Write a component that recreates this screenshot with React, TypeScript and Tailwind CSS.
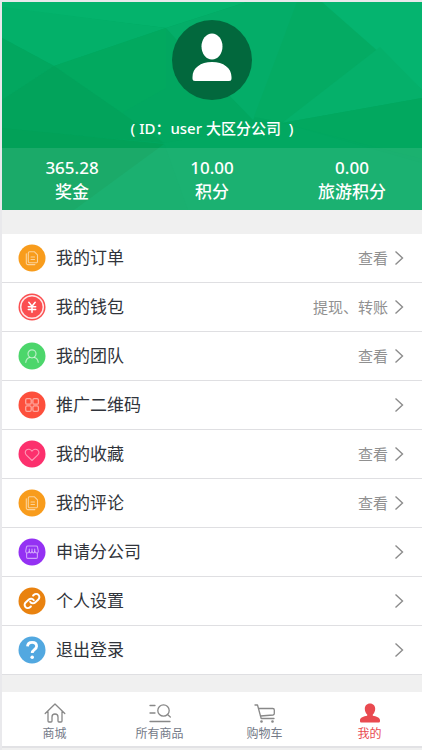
import type { ReactNode } from "react";

type MenuItem = {
  label: string;
  action?: string;
  icon: ReactNode;
};

function Badge({ className, children }: { className: string; children: ReactNode }) {
  return (
    <svg
      viewBox="0 0 28 28"
      className={`h-7 w-7 flex-shrink-0 ${className}`}
      fill="none"
      strokeLinecap="round"
      strokeLinejoin="round"
      aria-hidden="true"
    >
      <circle cx="14" cy="14" r="13.5" fill="currentColor" />
      {children}
    </svg>
  );
}

function DocumentIcon() {
  return (
    <Badge className="text-[#f89c1c]">
      <g stroke="#fff" strokeOpacity="0.55" strokeWidth="1.1">
        <path d="M11.500 7.800h5l3 3v6.700a1.200 1.200 0 0 1-1.200 1.200h-6.800a1.200 1.200 0 0 1-1.200-1.200V9a1.200 1.200 0 0 1 1.200-1.200z" />
        <path d="M8.300 9.800v9.200a1.600 1.600 0 0 0 1.600 1.600h7" />
        <path d="M13 13h3.500M13 15.500h3.500" />
      </g>
    </Badge>
  );
}

function WalletIcon() {
  return (
    <Badge className="text-[#fb4f50]">
      <circle cx="14" cy="14" r="11.3" stroke="#fff" strokeOpacity="0.85" strokeWidth="1.5" />
      <path d="M10.800 9.300l3.200 4 3.200-4M14 13.300v6M10.300 13.800h7.400M10.300 16.500h7.400" stroke="#fff" strokeWidth="1.5" />
    </Badge>
  );
}

function TeamIcon() {
  return (
    <Badge className="text-[#4cd66b]">
      <g stroke="#fff" strokeOpacity="0.6" strokeWidth="1.2">
        <circle cx="14" cy="11.8" r="4" />
        <path d="M7.800 20.300c.3-3 2-4.500 4-5M20.200 20.300c-.3-3-2-4.500-4-5" />
      </g>
    </Badge>
  );
}

function CodeIcon() {
  return (
    <Badge className="text-[#fd4f3c]">
      <g stroke="#fff" strokeOpacity="0.5" strokeWidth="1.3">
        <rect x="7.7" y="7.7" width="5.5" height="5.5" rx="1.3" />
        <rect x="14.9" y="7.7" width="5.5" height="5.5" rx="1.3" />
        <rect x="7.7" y="14.9" width="5.5" height="5.5" rx="1.3" />
        <rect x="14.9" y="14.9" width="5.5" height="5.5" rx="1.3" />
      </g>
    </Badge>
  );
}

function HeartIcon() {
  return (
    <Badge className="text-[#fc306d]">
      <path
        d="M14 20.500l-5.600-5.400c-1.500-1.500-1.500-3.600-.2-4.900 1.600-1.500 4.300-1.200 5.800.9 1.500-2.100 4.200-2.400 5.800-.9 1.300 1.300 1.300 3.400-.2 4.900z"
        stroke="#fff"
        strokeOpacity="0.5"
        strokeWidth="1.1"
      />
    </Badge>
  );
}

function ShopIcon() {
  return (
    <Badge className="text-[#9431f3]">
      <g stroke="#fff" strokeOpacity="0.55" strokeWidth="1.1">
        <path d="M9.800 8h8.400a1.300 1.300 0 0 1 1.300 1l.8 4.200c0 2.300-3.100 2.300-3.500.2-.4 2-2.500 2-2.800 0-.3 2-2.400 2-2.800 0-.4 2.100-3.500 2.100-3.500-.2L8.500 9a1.300 1.300 0 0 1 1.300-1z" />
        <path d="M11.300 11v2.300M14 11v2.300M16.700 11v2.300" />
        <path d="M8.600 15.500v3.700a1.200 1.200 0 0 0 1.200 1.200h8.400a1.200 1.200 0 0 0 1.200-1.200v-3.700" />
      </g>
    </Badge>
  );
}

function LinkIcon() {
  return (
    <Badge className="text-[#e9820f]">
      <g transform="rotate(-43 14 14)" stroke="#fff" strokeWidth="2">
        <path d="M9.500 17.200H8.300a3.200 3.200 0 0 1 0-6.400h4.400a3.200 3.200 0 0 1 3.100 3.900" />
        <path d="M18.500 10.800h1.200a3.200 3.200 0 0 1 0 6.400h-4.400a3.200 3.200 0 0 1-3.100-3.900" />
      </g>
    </Badge>
  );
}

function QuestionIcon() {
  return (
    <Badge className="text-[#52a8e0]">
      <path
        d="M9.500 10.300C9.700 7.700 11.600 6.300 14.100 6.300c2.700 0 4.500 1.500 4.500 3.900 0 3.500-4.400 3.400-4.400 6.800"
        stroke="#fff"
        strokeWidth="2.8"
        strokeLinecap="butt"
      />
      <circle cx="14.2" cy="21.3" r="1.8" fill="#fff" />
    </Badge>
  );
}

const stats = [
  { value: "365.28", label: "奖金" },
  { value: "10.00", label: "积分" },
  { value: "0.00", label: "旅游积分" },
];

const menu: MenuItem[] = [
  { label: "我的订单", action: "查看", icon: <DocumentIcon /> },
  { label: "我的钱包", action: "提现、转账", icon: <WalletIcon /> },
  { label: "我的团队", action: "查看", icon: <TeamIcon /> },
  { label: "推广二维码", icon: <CodeIcon /> },
  { label: "我的收藏", action: "查看", icon: <HeartIcon /> },
  { label: "我的评论", action: "查看", icon: <DocumentIcon /> },
  { label: "申请分公司", icon: <ShopIcon /> },
  { label: "个人设置", icon: <LinkIcon /> },
  { label: "退出登录", icon: <QuestionIcon /> },
];

const tabs = [
  {
    label: "商城",
    icon: <path d="M1.200 11.500L11 2l9.800 9.500M4 9.500V19a1 1 0 0 0 1 1h2a1 1 0 0 0 1-1v-4a3 3 0 0 1 6 0v4a1 1 0 0 0 1 1h2a1 1 0 0 0 1-1V9.500" />,
  },
  {
    label: "所有商品",
    icon: (
      <>
        <path d="M1 3.500h5M1 11h5M1 19.500h20" />
        <circle cx="14.5" cy="8.5" r="5.7" />
        <path d="M18.500 12.500l2.800 2.500" />
      </>
    ),
  },
  {
    label: "购物车",
    icon: (
      <>
        <path d="M1 3h2.500l3.700 13.500H20" />
        <path d="M5 6.500h13.800a1.500 1.500 0 0 1 1.500 1.500v3.500a1.500 1.500 0 0 1-1.300 1.500L6.500 14" />
        <circle cx="7.5" cy="19.5" r="0.7" />
        <circle cx="18.5" cy="19.5" r="0.7" />
      </>
    ),
  },
  {
    label: "我的",
    active: true,
    icon: (
      <path
        d="M11 1.500c3.200 0 5.200 2.300 5.200 5.300 0 2.300-1 4.500-2.400 5.800v1.200c3.500.7 7.200 1.800 7.200 4.400V19c0 1-.6 1.500-1.500 1.500h-17C1.600 20.500 1 20 1 19v-.8c0-2.600 3.700-3.700 7.200-4.400v-1.200C6.800 11.300 5.800 9.100 5.800 6.800c0-3 2-5.300 5.200-5.300z"
        fill="currentColor"
        stroke="none"
      />
    ),
  },
];

function HeaderBackdrop() {
  return (
    <svg
      viewBox="0 0 420 208"
      preserveAspectRatio="none"
      className="absolute inset-0 h-full w-full"
      aria-hidden="true"
    >
      <rect width="420" height="208" fill="#02a760" />
      <path d="M0 0h245L164 26 0 6z" fill="#04b36c" />
      <path d="M0 5l164 21L52 64 0 36z" fill="#03b069" />
      <path d="M164 26L52 64l68 47 44-25z" fill="#02a95f" />
      <path d="M52 64L0 98V36z" fill="#02a75f" />
      <path d="M52 64L0 98v29l162 14-42-30z" fill="#02a35b" />
      <path d="M0 126l162 16-90 66H0z" fill="#02a158" />
      <path d="M164 26L245 0h70l-42 78-22 40-60-62z" fill="#04ad68" />
      <path d="M295 0h30l95 88v8L280 120l-28-5z" fill="#04ab63" />
      <path d="M320 0h100v88z" fill="#05b46f" />
      <path d="M378 45L280 121l140-25v-8z" fill="#05b06a" />
      <path d="M420 96l-140 25 140 36z" fill="#02a85f" />
      <path d="M162 141l118-20 140 40v47H186z" fill="#02a861" />
    </svg>
  );
}

export default function App() {
  return (
    <div className="min-h-screen border-t-2 border-l-2 border-[#e9e9ec] bg-[#f0f0f0] font-['Noto_Sans','Noto_Sans_CJK_SC',sans-serif]">
      <header className="relative overflow-hidden text-white">
        <HeaderBackdrop />
        <div className="relative flex flex-col items-center pt-[18px] pb-2">
          <svg viewBox="0 0 80 80" className="h-20 w-20" role="img" aria-label="头像">
            <circle cx="40" cy="40" r="40" fill="#02683d" />
            <ellipse cx="40" cy="26.5" rx="10.5" ry="13" fill="#fff" />
            <path
              d="M20.500 57c0-9 8-15 19.500-15s19.500 6 19.500 15v1.500a2.500 2.500 0 0 1-2.500 2.500H23a2.500 2.500 0 0 1-2.500-2.500z"
              fill="#fff"
            />
          </svg>
          <h1 className="mt-4 text-[15px] leading-6 font-medium whitespace-pre">( ID：user 大区分公司  )</h1>
        </div>
        <dl className="relative grid grid-cols-3 bg-white/10 pt-2 pb-[6px] text-center text-[17px] leading-6 font-medium">
          {stats.map((stat) => (
            <div key={stat.label} className="flex flex-col-reverse">
              <dt>{stat.label}</dt>
              <dd>{stat.value}</dd>
            </div>
          ))}
        </dl>
      </header>

      <main className="pt-6 pb-[17px]">
        <ul className="bg-white">
          {menu.map((item) => (
            <li key={item.label} className="border-b border-[#dfdfe2]">
              <a href="#" className="flex h-12 items-center gap-[6px] pr-[18px] pl-4">
                {item.icon}
                <span className="ml-1 flex-1 text-[17px] text-[#30343b]">{item.label}</span>
                {item.action && <span className="text-[15px] text-[#909090]">{item.action}</span>}
                <svg viewBox="0 0 10 16" className="h-4 w-[10px]" fill="none" stroke="#8c8c8c" strokeWidth="1.4" aria-hidden="true">
                  <path d="M1.500 1.500L8.500 8l-7 6.500" />
                </svg>
              </a>
            </li>
          ))}
        </ul>
      </main>

      <nav className="grid grid-cols-4 border-b-2 border-[#e2e2e5] bg-white">
        {tabs.map((tab) => (
          <a
            key={tab.label}
            href="#"
            aria-current={tab.active ? "page" : undefined}
            className={`flex flex-col items-center pt-[10px] pb-[2px] text-xs ${tab.active ? "text-[#e94a50]" : "text-[#737987]"}`}
          >
            <svg
              viewBox="0 0 22 22"
              className={`h-[22px] w-[22px] ${tab.active ? "" : "text-[#888888]"}`}
              fill="none"
              stroke="currentColor"
              strokeWidth="1.3"
              strokeLinecap="round"
              strokeLinejoin="round"
              aria-hidden="true"
            >
              {tab.icon}
            </svg>
            <span className="leading-5">{tab.label}</span>
          </a>
        ))}
      </nav>
    </div>
  );
}
